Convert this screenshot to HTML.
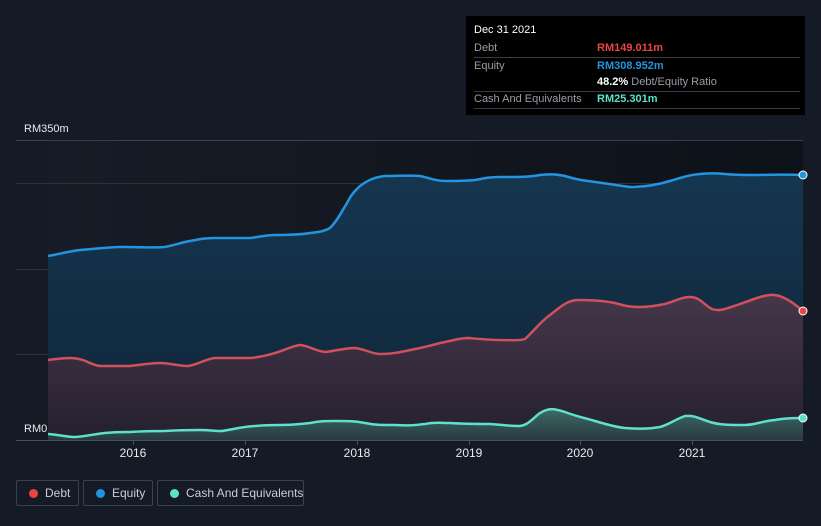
<!DOCTYPE html>
<html><head><style>
html,body{margin:0;padding:0;background:#151b26;width:821px;height:526px;overflow:hidden;font-family:"Liberation Sans",sans-serif}
.tip{position:absolute;left:466px;top:16px;width:339px;height:99px;background:#000;font-size:11px}
.tip .r{position:absolute;left:8px;right:5px;height:17px;border-bottom:1px solid #3a3d44;color:#9a9ea6;line-height:17px}
.leg{position:absolute;top:480px;height:26px;border:1px solid #3b414c;border-radius:2px;color:#c9cdd3;font-size:12px;line-height:24px;box-sizing:border-box;white-space:nowrap}
.dot{position:absolute;top:8px;left:12px;width:9px;height:9px;border-radius:50%}
</style></head><body>
<svg width="821" height="526" style="position:absolute;left:0;top:0">
<defs>
<linearGradient id="bg" x1="0" x2="1" y1="0" y2="0"><stop offset="0" stop-color="#161c27"/><stop offset="0.4" stop-color="#131821"/><stop offset="1" stop-color="#0d1118"/></linearGradient>
<linearGradient id="eq" x1="0" x2="0" y1="0" y2="1"><stop offset="0" stop-color="#153650"/><stop offset="1" stop-color="#0f2538"/></linearGradient>
<linearGradient id="db" x1="0" x2="0" y1="0" y2="1"><stop offset="0" stop-color="#46364a"/><stop offset="1" stop-color="#24202e"/></linearGradient>
<linearGradient id="cs" x1="0" x2="0" y1="0" y2="1"><stop offset="0" stop-color="#3d6a66"/><stop offset="1" stop-color="#283a40"/></linearGradient>
</defs>
<rect x="48" y="140" width="755" height="300" fill="url(#bg)"/>
<g stroke="#2c323c" stroke-width="1">
<line x1="16" y1="140.5" x2="803" y2="140.5" stroke="#3b4049"/>
<line x1="16" y1="183.5" x2="803" y2="183.5"/>
<line x1="16" y1="269.5" x2="803" y2="269.5"/>
<line x1="16" y1="354.5" x2="803" y2="354.5"/>
</g>
<path d="M48,256 C60,254 70,251 80,250 C95,249 110,247 120,247 C140,247 155,248 165,247 C175,245 180,243 185,242 C200,239 205,238 215,238 C235,238 245,238 250,238 C260,237 265,235 275,235 C290,235 305,234 310,233 C320,232 325,231 330,228 C338,220 342,211 347,203 C352,193 356,190 360,186 C368,180 375,177 385,176 C400,176 410,175 420,176 C430,178 435,181 445,181 C460,181 465,181 475,180 C485,178 490,177 500,177 C520,177 530,177 540,175 C550,174 555,174 565,176 C575,179 580,180 595,182 C610,184 615,185 630,187 C645,187 660,184 670,181 C680,178 688,175 700,174 C710,173 715,173 725,174 C735,175 740,175 755,175 C765,175 780,174 803,175 L803,440 L48,440Z" fill="url(#eq)"/>
<path d="M48,360 C58,359 62,358 70,358 C85,358 90,365 100,366 C115,366 125,366 130,366 C140,365 150,363 160,363 C170,363 178,366 188,366 C200,364 205,359 215,358 C230,358 240,358 250,358 C262,357 268,355 275,353 C285,350 292,346 300,345 C310,346 315,351 325,352 C335,351 345,348 355,348 C365,349 372,354 380,354 C395,354 405,351 415,349 C430,346 435,344 445,342 C455,340 460,338 468,338 C480,339 490,340 500,340 C510,340 520,341 525,339 C535,330 540,322 550,315 C560,307 568,300 578,300 C595,300 605,301 615,303 C625,306 630,307 640,307 C650,307 660,305 665,304 C675,301 682,297 690,297 C700,297 704,305 712,309 C720,312 728,308 740,304 C752,300 760,296 770,295 C780,294 790,300 803,311 L803,440 L48,440Z" fill="url(#db)"/>
<path d="M48,434 C60,435 68,437 75,437 C88,436 95,434 105,433 C115,432 120,432 130,432 C145,431 155,431 165,431 C180,430 190,430 200,430 C210,430 215,431 222,431 C235,429 240,427 255,426 C265,425 270,425 280,425 C295,425 300,424 310,423 C320,421 325,421 335,421 C350,421 355,421 365,423 C375,425 380,425 395,425 C410,426 415,425 425,424 C435,422 440,423 450,423 C465,424 475,424 490,424 C505,425 510,426 520,426 C528,425 532,419 540,413 C550,407 555,409 565,412 C575,416 585,418 595,421 C605,424 615,427 625,428 C640,429 648,429 660,427 C670,424 676,419 685,416 C695,415 700,419 710,422 C720,425 730,425 745,425 C755,425 762,421 775,420 C785,418 795,418 803,418 L803,440 L48,440Z" fill="url(#cs)"/>
<path d="M48,256 C60,254 70,251 80,250 C95,249 110,247 120,247 C140,247 155,248 165,247 C175,245 180,243 185,242 C200,239 205,238 215,238 C235,238 245,238 250,238 C260,237 265,235 275,235 C290,235 305,234 310,233 C320,232 325,231 330,228 C338,220 342,211 347,203 C352,193 356,190 360,186 C368,180 375,177 385,176 C400,176 410,175 420,176 C430,178 435,181 445,181 C460,181 465,181 475,180 C485,178 490,177 500,177 C520,177 530,177 540,175 C550,174 555,174 565,176 C575,179 580,180 595,182 C610,184 615,185 630,187 C645,187 660,184 670,181 C680,178 688,175 700,174 C710,173 715,173 725,174 C735,175 740,175 755,175 C765,175 780,174 803,175" fill="none" stroke="#2394df" stroke-width="2.5"/>
<path d="M48,360 C58,359 62,358 70,358 C85,358 90,365 100,366 C115,366 125,366 130,366 C140,365 150,363 160,363 C170,363 178,366 188,366 C200,364 205,359 215,358 C230,358 240,358 250,358 C262,357 268,355 275,353 C285,350 292,346 300,345 C310,346 315,351 325,352 C335,351 345,348 355,348 C365,349 372,354 380,354 C395,354 405,351 415,349 C430,346 435,344 445,342 C455,340 460,338 468,338 C480,339 490,340 500,340 C510,340 520,341 525,339 C535,330 540,322 550,315 C560,307 568,300 578,300 C595,300 605,301 615,303 C625,306 630,307 640,307 C650,307 660,305 665,304 C675,301 682,297 690,297 C700,297 704,305 712,309 C720,312 728,308 740,304 C752,300 760,296 770,295 C780,294 790,300 803,311" fill="none" stroke="#d0505e" stroke-width="2.5"/>
<path d="M48,434 C60,435 68,437 75,437 C88,436 95,434 105,433 C115,432 120,432 130,432 C145,431 155,431 165,431 C180,430 190,430 200,430 C210,430 215,431 222,431 C235,429 240,427 255,426 C265,425 270,425 280,425 C295,425 300,424 310,423 C320,421 325,421 335,421 C350,421 355,421 365,423 C375,425 380,425 395,425 C410,426 415,425 425,424 C435,422 440,423 450,423 C465,424 475,424 490,424 C505,425 510,426 520,426 C528,425 532,419 540,413 C550,407 555,409 565,412 C575,416 585,418 595,421 C605,424 615,427 625,428 C640,429 648,429 660,427 C670,424 676,419 685,416 C695,415 700,419 710,422 C720,425 730,425 745,425 C755,425 762,421 775,420 C785,418 795,418 803,418" fill="none" stroke="#5ee0cc" stroke-width="2.5"/>
<rect x="16" y="420" width="32" height="20" fill="#151b26"/>
<line x1="16" y1="440.5" x2="803" y2="440.5" stroke="#4a4f58"/>
<g stroke="#4a4f58"><line x1="133.5" y1="440" x2="133.5" y2="445"/><line x1="245.5" y1="440" x2="245.5" y2="445"/><line x1="357.5" y1="440" x2="357.5" y2="445"/><line x1="469.5" y1="440" x2="469.5" y2="445"/><line x1="580.5" y1="440" x2="580.5" y2="445"/><line x1="692.5" y1="440" x2="692.5" y2="445"/></g>
<circle cx="803" cy="175" r="4" fill="#2394df" stroke="#fff" stroke-width="1"/>
<circle cx="803" cy="311" r="4" fill="#e84545" stroke="#fff" stroke-width="1"/>
<circle cx="803" cy="418" r="4" fill="#5ee0cc" stroke="#fff" stroke-width="1"/>
<g font-family="Liberation Sans,sans-serif" font-size="11" fill="#e8eaed">
<text x="24" y="132">RM350m</text>
<text x="24" y="432">RM0</text>
<g text-anchor="middle" font-size="12"><text x="133" y="457">2016</text><text x="245" y="457">2017</text><text x="357" y="457">2018</text><text x="469" y="457">2019</text><text x="580" y="457">2020</text><text x="692" y="457">2021</text></g>
</g>
</svg>
<div class="tip">
<div style="position:absolute;left:8px;top:8px;color:#fff;font-size:11px">Dec 31 2021</div>
<div class="r" style="top:24px">Debt<span style="position:absolute;left:123px;color:#e84545;font-weight:bold">RM149.011m</span></div>
<div class="r" style="top:42px;border:none">Equity<span style="position:absolute;left:123px;color:#2394df;font-weight:bold">RM308.952m</span></div>
<div class="r" style="top:58px"><span style="position:absolute;left:123px;white-space:nowrap"><b style="color:#fff">48.2%</b> Debt/Equity Ratio</span></div>
<div class="r" style="top:75px">Cash And Equivalents<span style="position:absolute;left:123px;color:#5ee0cc;font-weight:bold">RM25.301m</span></div>
</div>
<div class="leg" style="left:16px;width:63px"><span class="dot" style="background:#e84545"></span><span style="position:absolute;left:28px">Debt</span></div>
<div class="leg" style="left:83px;width:70px"><span class="dot" style="background:#2394df"></span><span style="position:absolute;left:28px">Equity</span></div>
<div class="leg" style="left:157px;width:147px"><span class="dot" style="background:#5ee0cc"></span><span style="position:absolute;left:28px">Cash And Equivalents</span></div>
</body></html>
